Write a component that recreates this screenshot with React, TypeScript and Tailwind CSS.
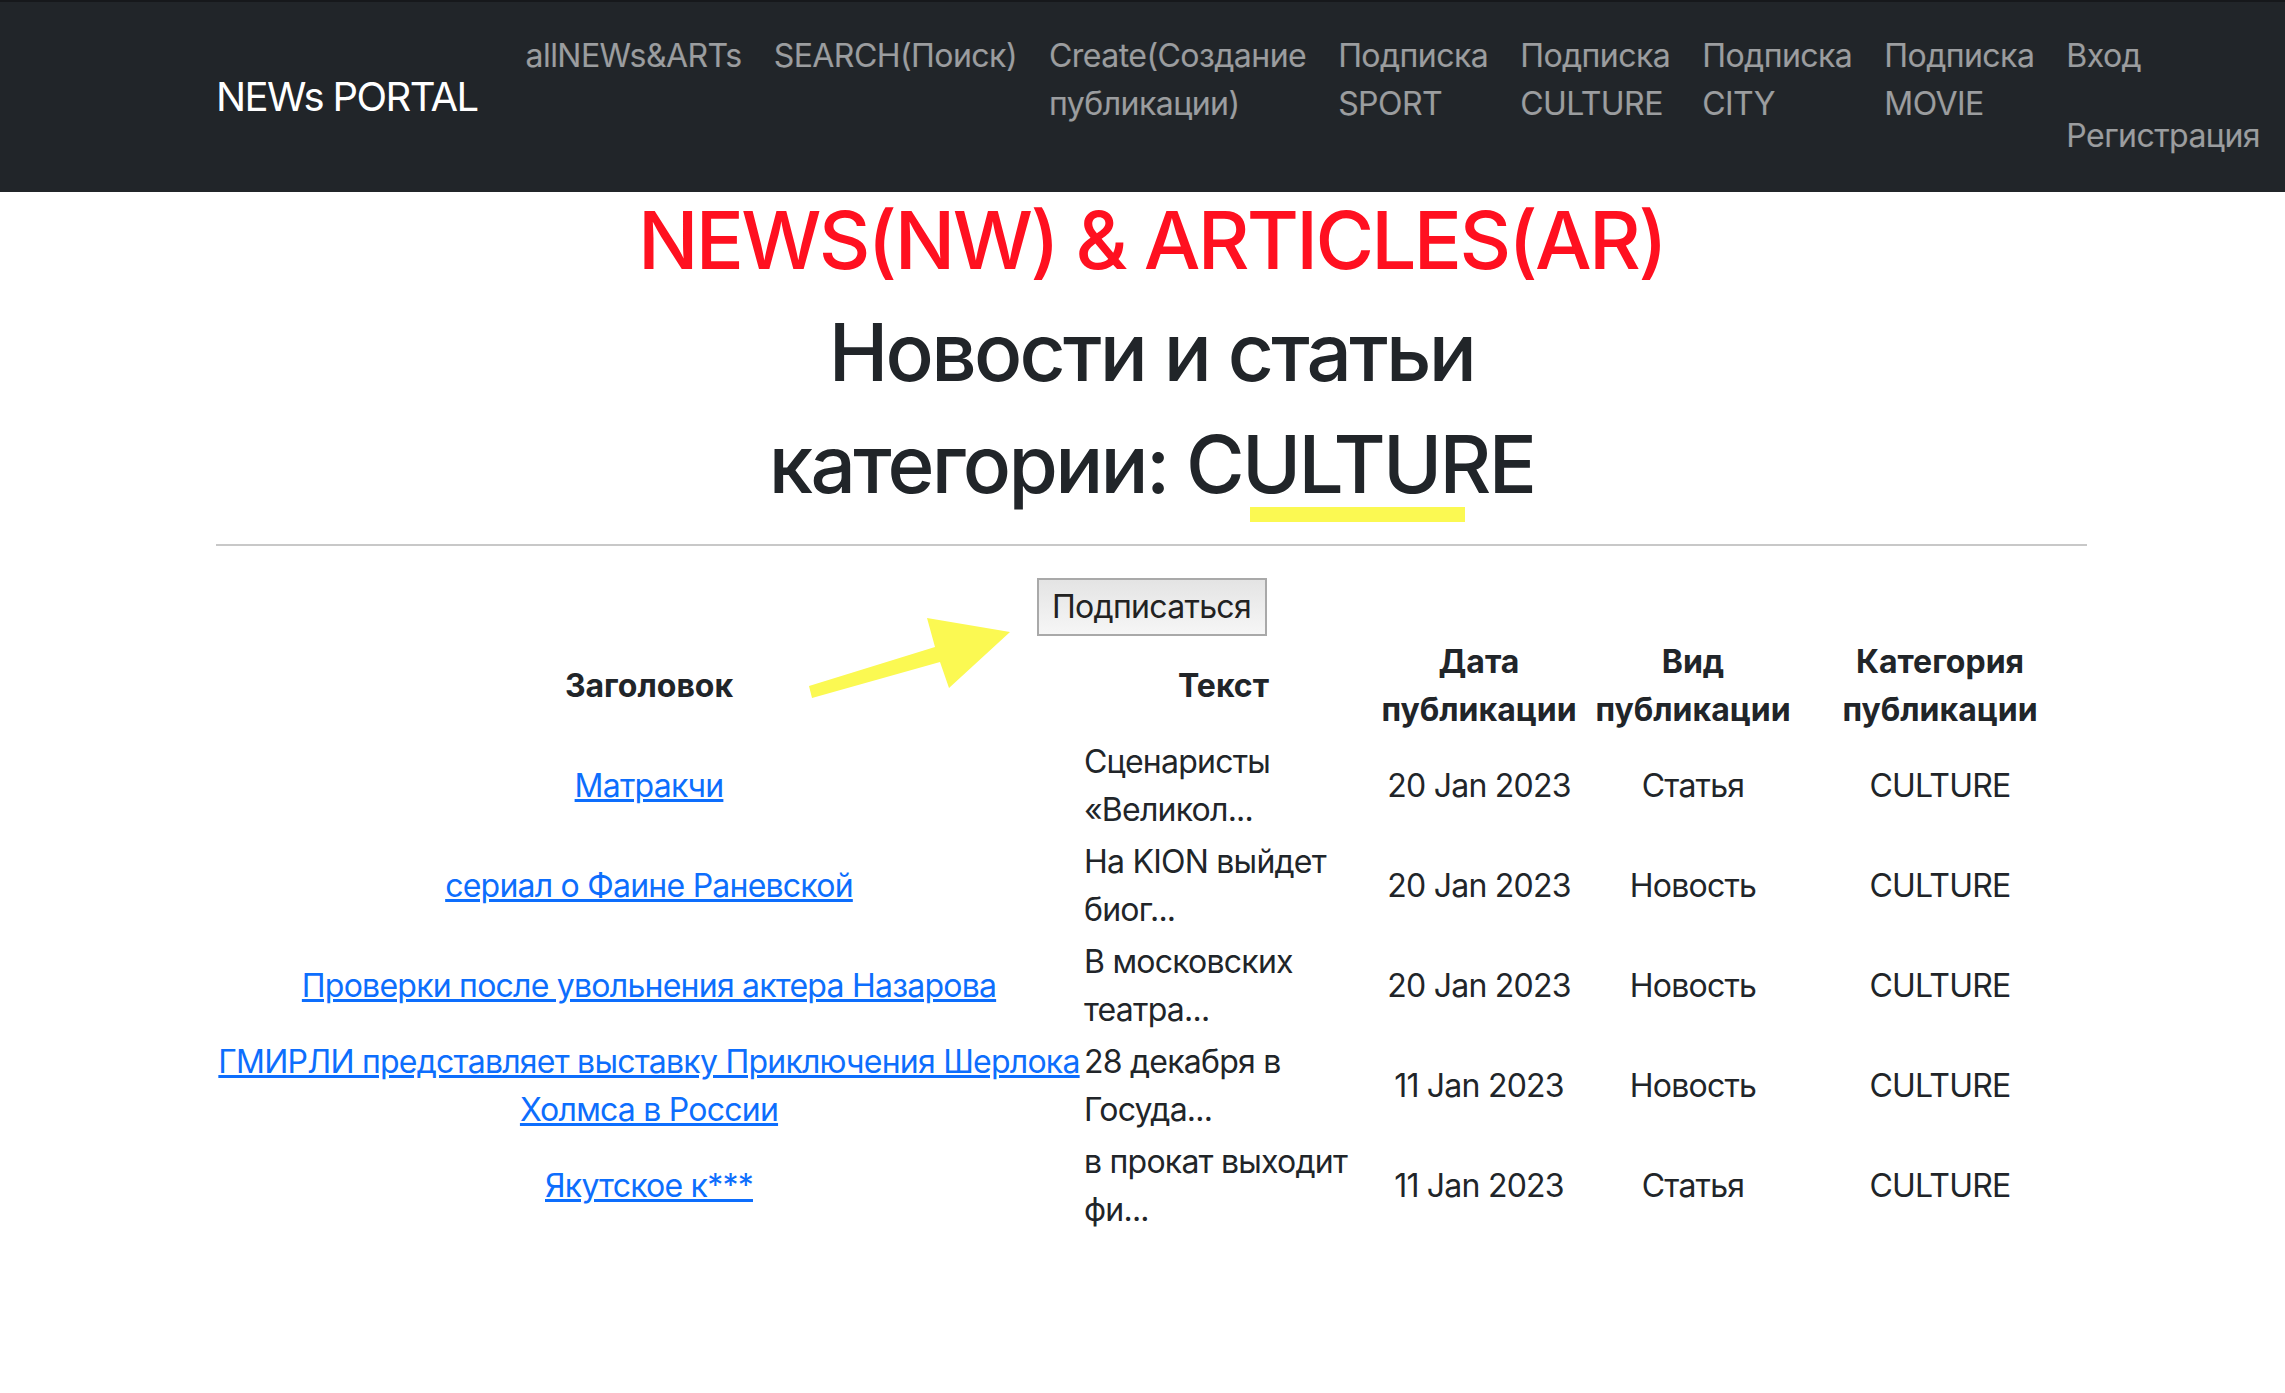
const navLinks = [
    ["allNEWs&ARTs"],
    ["SEARCH(Поиск)"],
    ["Create(Создание", "публикации)"],
    ["Подписка", "SPORT"],
    ["Подписка", "CULTURE"],
    ["Подписка", "CITY"],
    ["Подписка", "MOVIE"],
];

const posts = [
    { title: ["Матракчи"], text: ["Сценаристы", "«Великол..."], date: "20 Jan 2023", kind: "Статья" },
    { title: ["сериал о Фаине Раневской"], text: ["На KION выйдет", "биог..."], date: "20 Jan 2023", kind: "Новость" },
    { title: ["Проверки после увольнения актера Назарова"], text: ["В московских", "театра..."], date: "20 Jan 2023", kind: "Новость" },
    { title: ["ГМИРЛИ представляет выставку Приключения Шерлока", "Холмса в России"], text: ["28 декабря в", "Госуда..."], date: "11 Jan 2023", kind: "Новость" },
    { title: ["Якутское к***"], text: ["в прокат выходит", "фи..."], date: "11 Jan 2023", kind: "Статья" },
];

const Navbar = () => {
    return (
        <nav className="box-border h-[192px] bg-[#212529] border-t-2 border-[#16181b] flex items-stretch pl-[216px] py-[14px]">
            <a href="#" className="self-center text-[40px] leading-[60px] tracking-[-0.04em] text-white mr-[32px] whitespace-nowrap">NEWs PORTAL</a>
            <ul className="flex items-start tracking-[-0.034em]">
                {navLinks.map((lines, i) => (
                    <li key={i} className="px-[16px] py-[16px] text-[32px] leading-[48px] text-white/55 whitespace-nowrap">
                        {lines.map((l, j) => <div key={j}>{l}</div>)}
                    </li>
                ))}
                <li className="flex flex-col">
                    <a href="#" className="px-[16px] py-[16px] text-[32px] leading-[48px] text-white/55">Вход</a>
                    <a href="#" className="px-[16px] py-[16px] text-[32px] leading-[48px] text-white/55 whitespace-nowrap">Регистрация</a>
                </li>
            </ul>
        </nav>
    );
};

const App = () => {
    return (
        <div className="min-h-screen bg-white font-[Inter,'Noto_Sans',sans-serif] text-[#212529]">
            <Navbar />

            <main className="relative pl-[216px] pr-[198px] pb-[80px]">
                <h1 className="text-center text-[80px] leading-[96px] font-medium tracking-[-0.034em] text-[#ff1020] mb-[16px]">NEWS(NW) &amp; ARTICLES(AR)</h1>
                <h1 className="text-center text-[80px] leading-[96px] font-medium tracking-[-0.034em] mb-[16px]">Новости и статьи</h1>
                <h1 className="text-center text-[80px] leading-[96px] font-medium tracking-[-0.034em]">категории: CULTURE</h1>

                <hr className="h-[2px] border-0 bg-[#c8c8c8] my-[32px]" />

                <div className="flex justify-center">
                    <button className="h-[58px] w-[230px] border-2 border-[#a9a9a9] bg-gradient-to-b from-[#e4e4e4] to-[#f6f6f6] text-[32px] tracking-[-0.022em] text-[#222]">
                        Подписаться
                    </button>
                </div>

                <table className="w-full table-fixed border-collapse text-[32px] leading-[48px] tracking-[-0.024em]">
                    <colgroup>
                        <col className="w-[866px]" />
                        <col className="w-[283px]" />
                        <col className="w-[228px]" />
                        <col className="w-[200px]" />
                        <col className="w-[294px]" />
                    </colgroup>
                    <thead className="tracking-normal">
                        <tr className="h-[100px]">
                            <th className="p-[2px] font-bold">Заголовок</th>
                            <th className="p-[2px] font-bold">Текст</th>
                            <th className="p-[2px] font-bold">Дата<br />публикации</th>
                            <th className="p-[2px] font-bold">Вид<br />публикации</th>
                            <th className="p-[2px] font-bold">Категория<br />публикации</th>
                        </tr>
                    </thead>
                    <tbody>
                        {posts.map((p, i) => (
                            <tr key={i} className="h-[100px]">
                                <td className="p-[2px] text-center">
                                    {p.title.map((t, j) => (
                                        <div key={j} className="whitespace-nowrap">
                                            <a href="#" className="text-[#0d6efd] underline">{t}</a>
                                        </div>
                                    ))}
                                </td>
                                <td className="p-[2px] text-left whitespace-nowrap">
                                    {p.text.map((t, j) => <div key={j}>{t}</div>)}
                                </td>
                                <td className="p-[2px] text-center">{p.date}</td>
                                <td className="p-[2px] text-center">{p.kind}</td>
                                <td className="p-[2px] text-center">CULTURE</td>
                            </tr>
                        ))}
                    </tbody>
                </table>

                {/* yellow annotation marks */}
                <div className="absolute left-[1250px] top-[315px] w-[215px] h-[15px] bg-[#fbf952]" />
                <svg className="absolute left-[805px] top-[423px]" width="210" height="90" viewBox="0 0 210 90">
                    <polygon points="4,71 130,32 122,3 205,17 144,73 135,47 7,83" fill="#fbf952" />
                </svg>
            </main>
        </div>
    );
};

export default App;
